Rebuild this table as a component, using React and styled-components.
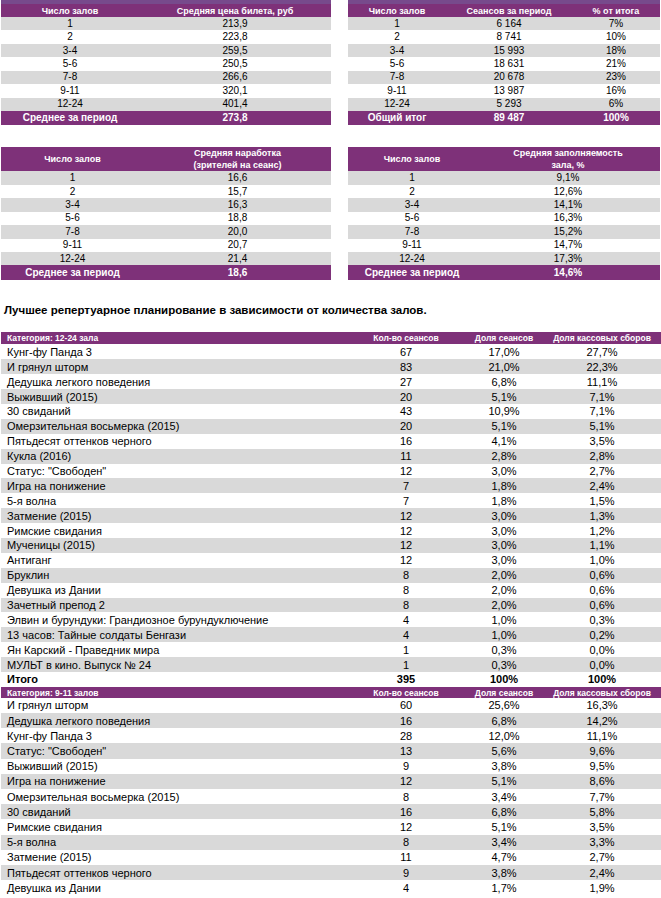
import React from 'react';
import styled, { createGlobalStyle } from 'styled-components';

const PURPLE = '#7e3179';
const GREY = '#d9d9d9';

const GlobalStyle = createGlobalStyle`
  body {
    margin: 0;
    background: #fff;
    font-family: "Liberation Sans", Arial, sans-serif;
  }
`;

const Page = styled.div`
  width: 661px;
  height: 898px;
  overflow: hidden;
  padding-left: 1px;
  box-sizing: border-box;
`;

const Pair = styled.div`
  display: flex;
  gap: 17px;
  margin-bottom: ${(p) => p.$mb || 0}px;
`;

const Table = styled.div`
  width: ${(p) => p.$w}px;
`;

const Strip = styled.div`
  height: 4px;
  background: #774a8c;
`;

const bgFor = (v) => {
  if (v === 'head' || v === 'foot') return PURPLE;
  if (v === 'grey') return GREY;
  return '#fff';
};

const Row = styled.div`
  display: grid;
  grid-template-columns: ${(p) => p.$cols};
  align-items: center;
  height: ${(p) => p.$h}px;
  background: ${(p) => bgFor(p.$v)};
  color: ${(p) => (p.$v === 'head' || p.$v === 'foot' ? '#fff' : '#000')};
  font-size: ${(p) => p.$fs || 10}px;
  font-weight: ${(p) => (p.$bold ? 700 : 400)};
`;

const Cell = styled.div`
  text-align: ${(p) => (p.$left ? 'left' : 'center')};
  padding-left: ${(p) => (p.$left ? 6 : 0)}px;
  white-space: nowrap;
  line-height: 12px;
`;

const Title = styled.div`
  font-size: 11.5px;
  font-weight: 700;
  padding-left: 3px;
  height: 14px;
  line-height: 14px;
  margin-bottom: 15px;
`;

const halls = ['1', '2', '3-4', '5-6', '7-8', '9-11', '12-24'];

const SmallTable = ({ w, cols, head, headH, rows, foot }) => (
  <Table $w={w}>
    <Row $cols={cols} $h={headH} $v="head" $fs={9} $bold>
      {head.map((h, i) => (
        <Cell key={i}>
          {h.split('\n').map((l, j) => (
            <div key={j}>{l}</div>
          ))}
        </Cell>
      ))}
    </Row>
    {rows.map((r, i) => (
      <Row key={i} $cols={cols} $h={13.43} $v={i % 2 === 0 ? 'grey' : 'white'} $fs={10}>
        {r.map((c, j) => (
          <Cell key={j}>{c}</Cell>
        ))}
      </Row>
    ))}
    <Row $cols={cols} $h={14.5} $v="foot" $fs={10} $bold>
      {foot.map((c, j) => (
        <Cell key={j}>{c}</Cell>
      ))}
    </Row>
  </Table>
);

const BIG_COLS = '356px 98px 98px 98px 1fr';

const cat1 = [
  ['Кунг-фу Панда 3', '67', '17,0%', '27,7%'],
  ['И грянул шторм', '83', '21,0%', '22,3%'],
  ['Дедушка легкого поведения', '27', '6,8%', '11,1%'],
  ['Выживший (2015)', '20', '5,1%', '7,1%'],
  ['30 свиданий', '43', '10,9%', '7,1%'],
  ['Омерзительная восьмерка (2015)', '20', '5,1%', '5,1%'],
  ['Пятьдесят оттенков черного', '16', '4,1%', '3,5%'],
  ['Кукла (2016)', '11', '2,8%', '2,8%'],
  ['Статус: "Свободен"', '12', '3,0%', '2,7%'],
  ['Игра на понижение', '7', '1,8%', '2,4%'],
  ['5-я волна', '7', '1,8%', '1,5%'],
  ['Затмение (2015)', '12', '3,0%', '1,3%'],
  ['Римские свидания', '12', '3,0%', '1,2%'],
  ['Мученицы (2015)', '12', '3,0%', '1,1%'],
  ['Антиганг', '12', '3,0%', '1,0%'],
  ['Бруклин', '8', '2,0%', '0,6%'],
  ['Девушка из Дании', '8', '2,0%', '0,6%'],
  ['Зачетный препод 2', '8', '2,0%', '0,6%'],
  ['Элвин и бурундуки: Грандиозное бурундуключение', '4', '1,0%', '0,3%'],
  ['13 часов: Тайные солдаты Бенгази', '4', '1,0%', '0,2%'],
  ['Ян Карский - Праведник мира', '1', '0,3%', '0,0%'],
  ['МУЛЬТ в кино. Выпуск № 24', '1', '0,3%', '0,0%'],
];

const cat2 = [
  ['И грянул шторм', '60', '25,6%', '16,3%'],
  ['Дедушка легкого поведения', '16', '6,8%', '14,2%'],
  ['Кунг-фу Панда 3', '28', '12,0%', '11,1%'],
  ['Статус: "Свободен"', '13', '5,6%', '9,6%'],
  ['Выживший (2015)', '9', '3,8%', '9,5%'],
  ['Игра на понижение', '12', '5,1%', '8,6%'],
  ['Омерзительная восьмерка (2015)', '8', '3,4%', '7,7%'],
  ['30 свиданий', '16', '6,8%', '5,8%'],
  ['Римские свидания', '12', '5,1%', '3,5%'],
  ['5-я волна', '8', '3,4%', '3,3%'],
  ['Затмение (2015)', '11', '4,7%', '2,7%'],
  ['Пятьдесят оттенков черного', '9', '3,8%', '2,4%'],
  ['Девушка из Дании', '4', '1,7%', '1,9%'],
];

const CategoryHead = ({ label, h }) => (
  <Row $cols={BIG_COLS} $h={h} $v="head" $fs={8.5} $bold>
    <Cell $left>{label}</Cell>
    <Cell>Кол-во сеансов</Cell>
    <Cell>Доля сеансов</Cell>
    <Cell>Доля кассовых сборов</Cell>
    <Cell />
  </Row>
);

const FilmRows = ({ rows, h }) =>
  rows.map((r, i) => (
    <Row key={i} $cols={BIG_COLS} $h={h} $v={i % 2 === 1 ? 'grey' : 'white'} $fs={11}>
      <Cell $left>{r[0]}</Cell>
      <Cell>{r[1]}</Cell>
      <Cell>{r[2]}</Cell>
      <Cell>{r[3]}</Cell>
      <Cell />
    </Row>
  ));

export default function App() {
  return (
    <Page>
      <GlobalStyle />
      <Pair>
        <Table $w={330}>
          <Strip />
        </Table>
        <Table $w={312}>
          <Strip />
        </Table>
      </Pair>
      <Pair $mb={22}>
        <SmallTable
          w={330}
          cols="138px 1fr"
          head={['Число залов', 'Средняя цена билета, руб']}
          headH={13}
          rows={halls.map((h, i) => [h, ['213,9', '223,8', '259,5', '250,5', '266,6', '320,1', '401,4'][i]])}
          foot={['Среднее за период', '273,8']}
        />
        <SmallTable
          w={312}
          cols="98px 126px 1fr"
          head={['Число залов', 'Сеансов за период', '% от итога']}
          headH={13}
          rows={halls.map((h, i) => [
            h,
            ['6 164', '8 741', '15 993', '18 631', '20 678', '13 987', '5 293'][i],
            ['7%', '10%', '18%', '21%', '23%', '16%', '6%'][i],
          ])}
          foot={['Общий итог', '89 487', '100%']}
        />
      </Pair>
      <Pair $mb={23}>
        <SmallTable
          w={330}
          cols="143px 1fr"
          head={['Число залов', 'Средняя наработка\n(зрителей на сеанс)']}
          headH={24}
          rows={halls.map((h, i) => [h, ['16,6', '15,7', '16,3', '18,8', '20,0', '20,7', '21,4'][i]])}
          foot={['Среднее за период', '18,6']}
        />
        <SmallTable
          w={312}
          cols="128px 1fr"
          head={['Число залов', 'Средняя заполняемость\nзала, %']}
          headH={24}
          rows={halls.map((h, i) => [h, ['9,1%', '12,6%', '14,1%', '16,3%', '15,2%', '14,7%', '17,3%'][i]])}
          foot={['Среднее за период', '14,6%']}
        />
      </Pair>
      <Title>Лучшее репертуарное планирование в зависимости от количества залов.</Title>
      <div>
        <CategoryHead label="Категория: 12-24 зала" h={12.5} />
        <FilmRows rows={cat1} h={14.9} />
        <Row $cols={BIG_COLS} $h={14.9} $v="white" $fs={11} $bold>
          <Cell $left>Итого</Cell>
          <Cell>395</Cell>
          <Cell>100%</Cell>
          <Cell>100%</Cell>
          <Cell />
        </Row>
        <CategoryHead label="Категория: 9-11 залов" h={11} />
        <FilmRows rows={cat2} h={15.2} />
      </div>
    </Page>
  );
}
